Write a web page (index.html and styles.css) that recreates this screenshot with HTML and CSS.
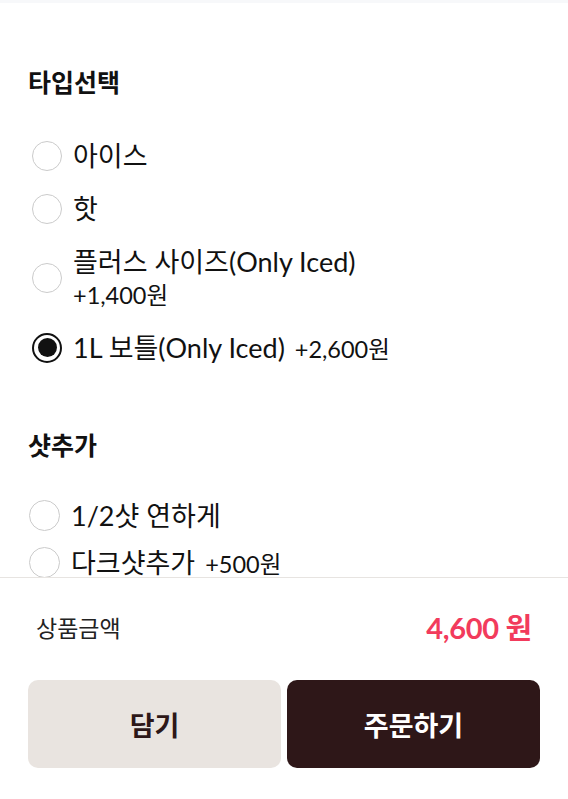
FILE: index.html
```html
<!DOCTYPE html>
<html lang="ko">
<head>
<meta charset="utf-8">
<title>옵션 선택</title>
<link rel="stylesheet" href="styles.css">
</head>
<body>
<div class="page">
  <div class="topbar"></div>
  <main class="options">
    <section class="group group-type">
      <h2 class="group-title">타입선택</h2>
      <ul class="choice-list">
        <li class="choice"><span class="radio"></span><span class="label">아이스</span></li>
        <li class="choice"><span class="radio"></span><span class="label">핫</span></li>
        <li class="choice"><span class="radio"></span><span class="label label-wrap">플러스 사이즈(Only Iced) <span class="extra">+1,400원</span></span></li>
        <li class="choice"><span class="radio checked"></span><span class="label">1L 보틀(Only Iced) <span class="extra">+2,600원</span></span></li>
      </ul>
    </section>
    <section class="group group-shot">
      <h2 class="group-title">샷추가</h2>
      <ul class="choice-list">
        <li class="choice"><span class="radio"></span><span class="label">1/2샷 연하게</span></li>
        <li class="choice"><span class="radio"></span><span class="label">다크샷추가 <span class="extra">+500원</span></span></li>
      </ul>
    </section>
  </main>
  <footer class="order-bar">
    <div class="total">
      <span class="total-label">상품금액</span>
      <span class="total-price">4,600 원</span>
    </div>
    <div class="actions">
      <button class="btn btn-cart">담기</button>
      <button class="btn btn-order">주문하기</button>
    </div>
  </footer>
</div>
</body>
</html>
```

FILE: styles.css
```css
* { box-sizing: border-box; }
html, body { margin: 0; padding: 0; height: 100%; }
body {
  font-family: Lato, "Noto Sans CJK KR", sans-serif;
  color: #111;
  background: #fff;
}
.page {
  height: 100vh;
  display: flex;
  flex-direction: column;
  overflow: hidden;
}
.topbar {
  height: 3px;
  background: #f7f8fa;
  flex: none;
}
.options {
  flex: 1;
  min-height: 0;
  overflow: hidden;
  padding: 0 28px;
}
.group-title {
  margin: 0;
  font-size: 25px;
  line-height: 32px;
  height: 32px;
  font-weight: 700;
  color: #111;
}
.group-type .group-title { margin-top: 63px; }
.group-shot .group-title { margin-top: 55px; }
.choice-list {
  list-style: none;
  margin: 31px 0 0;
  padding: 0;
}
.choice {
  display: flex;
  align-items: center;
  gap: 11px;
  padding: 9.5px 0;
}
.group-shot .choice { padding: 6.5px 0; }
.radio {
  flex: none;
  width: 30px;
  height: 30px;
  border-radius: 50%;
  border: 1.5px solid #cbcbcb;
  margin-left: 4px;
  position: relative;
}
.group-shot .radio { margin-left: 1px; width: 31px; height: 31px; }
.radio.checked {
  border: 2.5px solid #111;
}
.radio.checked::after {
  content: "";
  position: absolute;
  left: 50%;
  top: 50%;
  width: 19px;
  height: 19px;
  margin: -9.5px 0 0 -9.5px;
  border-radius: 50%;
  background: #111;
}
.label {
  font-size: 27px;
  line-height: 34px;
  color: #111;
}
.label-wrap { max-width: 330px; }
.extra {
  font-size: 23.5px;
  line-height: 1;
  margin-left: 3px;
}
.label-wrap .extra {
  display: block;
  margin-left: 0;
  line-height: 33px;
}
.order-bar {
  flex: none;
  height: 222px;
  border-top: 1.5px solid #e7e4e1;
  background: #fff;
  padding: 28px 28px 31px;
  display: flex;
  flex-direction: column;
}
.total {
  display: flex;
  justify-content: space-between;
  align-items: center;
  padding: 0 8px;
}
.total-label {
  font-size: 23px;
  line-height: 44px;
  color: #222;
}
.total-price {
  font-size: 29px;
  line-height: 44px;
  font-weight: 700;
  color: #f23b5c;
  letter-spacing: -0.3px;
}
.actions {
  margin-top: 30px;
  display: flex;
  gap: 6px;
}
.btn {
  flex: 1;
  height: 88px;
  border: none;
  border-radius: 10px;
  font-family: Lato, "Noto Sans CJK KR", sans-serif;
  font-size: 27px;
  font-weight: 700;
  cursor: pointer;
}
.btn-cart {
  background: #e9e4e0;
  color: #2d1718;
}
.btn-order {
  background: #2e1718;
  color: #fff;
}
```
